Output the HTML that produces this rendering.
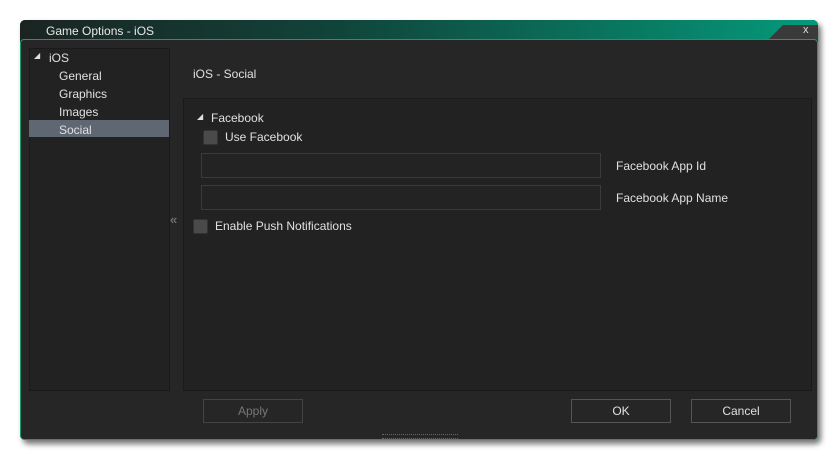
<!DOCTYPE html><html><head><style>
body{margin:0;width:840px;height:460px;background:#fff;position:relative;font-family:"Liberation Sans",sans-serif;font-size:12px;color:#e0e0e0;overflow:hidden}
.a{position:absolute}
.t{margin-top:1px}
.win{left:20px;top:20px;width:798px;height:420px;background:#262626;border-radius:5px;box-shadow:3px 4px 6px rgba(0,0,0,.55);overflow:hidden}
.title{left:0;top:0;width:798px;height:20px;background:linear-gradient(90deg,#1b2422 0%,#10443a 40%,#059a7a 100%)}
.body{left:0;top:19px;width:796px;height:399px;border:1px solid #1c9a6e;border-radius:4px;background:#262626}
.cb{width:13px;height:13px;background:#4a4a4a;border:1px solid #333;border-radius:2px}
.in{background:#232323;border:1px solid #3a3a3a}
.btn{border:1px solid #555;height:22px;width:98px;text-align:center;line-height:22px;background:#262626}
</style></head><body>
<div class="a win">
<div class="a title"><span class="a" style="left:26px;top:4px;color:#e8e8e8">Game Options - iOS</span>
<div class="a" style="left:748px;top:5px;width:50px;height:15px;background:#3a3a3a;clip-path:polygon(30% 0,100% 0,100% 100%,0 100%)"></div>
<span class="a" style="left:783px;top:4px;font-size:11px;color:#ddd">x</span></div>
<div class="a body"></div>
</div>
<div class="a" style="left:29px;top:48px;width:139px;height:341px;background:#222;border:1px solid #1a1a1a"></div>
<div class="a" style="left:29px;top:120px;width:140px;height:17px;background:#5f6872"></div>
<span class="a" style="left:34px;top:51px;font-size:8px">◢</span>
<span class="a" style="left:49px;top:51px">iOS</span>
<span class="a" style="left:59px;top:69px">General</span>
<span class="a" style="left:59px;top:87px">Graphics</span>
<span class="a" style="left:59px;top:105px">Images</span>
<span class="a" style="left:59px;top:123px">Social</span>
<span class="a" style="left:193px;top:67px">iOS - Social</span>
<span class="a" style="left:170px;top:212px;color:#888;font-size:13px">«</span>
<div class="a" style="left:183px;top:98px;width:627px;height:291px;background:#222;border:1px solid #1a1a1a"></div>
<span class="a" style="left:197px;top:112px;font-size:8px">◢</span>
<span class="a" style="left:211px;top:111px">Facebook</span>
<div class="a cb" style="left:203px;top:130px"></div>
<span class="a" style="left:225px;top:130px">Use Facebook</span>
<div class="a in" style="left:201px;top:153px;width:398px;height:23px"></div>
<div class="a in" style="left:201px;top:185px;width:398px;height:23px"></div>
<span class="a" style="left:616px;top:159px">Facebook App Id</span>
<span class="a" style="left:616px;top:191px">Facebook App Name</span>
<div class="a cb" style="left:193px;top:219px"></div>
<span class="a" style="left:215px;top:219px">Enable Push Notifications</span>
<div class="a btn" style="left:203px;top:399px;color:#777;border-color:#444">Apply</div>
<div class="a btn" style="left:571px;top:399px">OK</div>
<div class="a btn" style="left:691px;top:399px">Cancel</div>
<div class="a" style="left:382px;top:434px;width:76px;height:3px;border-top:1px dotted #666;border-bottom:1px dotted #666"></div>
</body></html>
